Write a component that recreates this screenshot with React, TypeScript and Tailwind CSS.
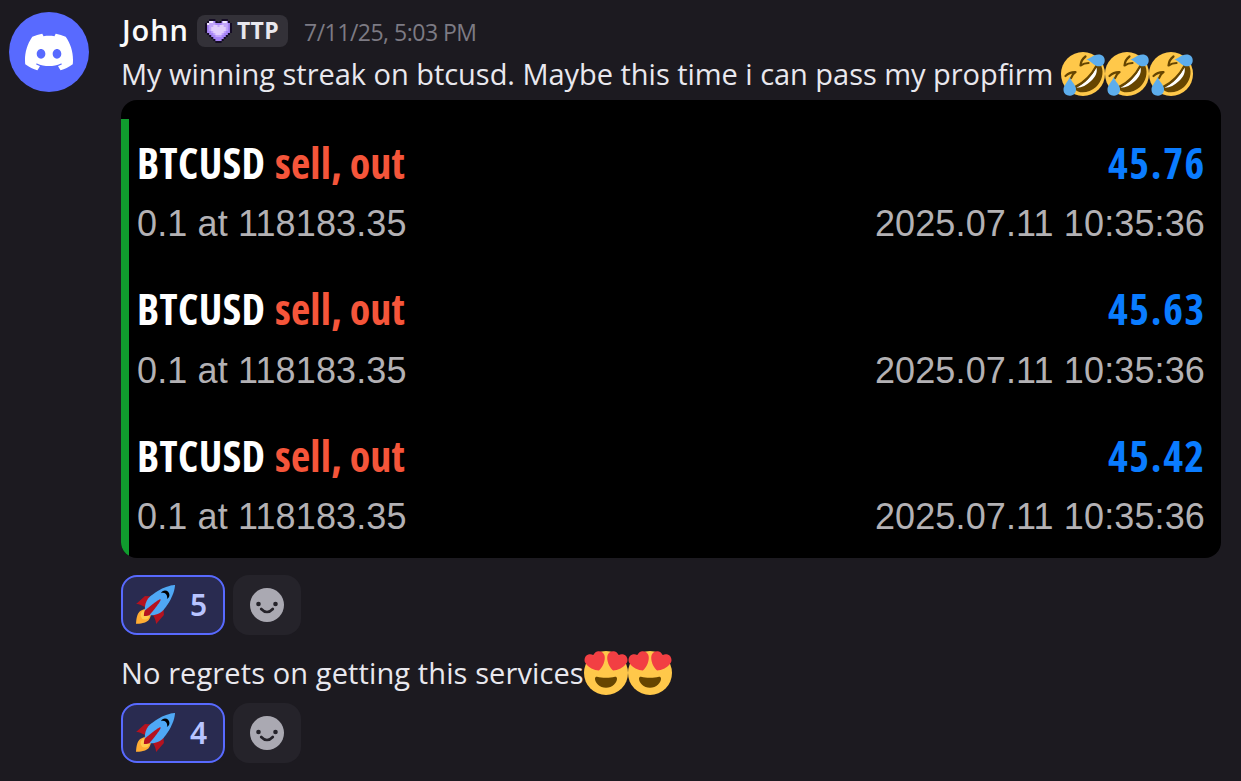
import { SiDiscord } from 'react-icons/si'

const deals = [
  { symbol: 'BTCUSD', side: 'sell, out', profit: '45.76', detail: '0.1 at 118183.35', time: '2025.07.11 10:35:36' },
  { symbol: 'BTCUSD', side: 'sell, out', profit: '45.63', detail: '0.1 at 118183.35', time: '2025.07.11 10:35:36' },
  { symbol: 'BTCUSD', side: 'sell, out', profit: '45.42', detail: '0.1 at 118183.35', time: '2025.07.11 10:35:36' },
]

function Rofl() {
  return (
    <svg viewBox="0 0 44 44" className="size-11 shrink-0">
      <circle cx="22" cy="22" r="22" fill="#ffc84a" />
      <path d="M36 12.5c1.500-.5 3.500 0 4.500 2 2.500 6 .5 15-5.500 20.500-5.500 5-13 6.500-18 4.500-2-.8-3.500-2.500-3-4 9-4.500 17-12.500 22-23z" fill="#664500" />
      <path d="M35.500 15.500c1.200 4.500-1 9.500-5.500 13.500-4.500 4.300-9.500 7-14.500 6.800 8.500-4.300 15-11 20-20.300z" fill="#fff" />
      <path d="M35.500 13.500c-5 9.500-12.500 17-21.500 21.500" fill="none" stroke="#664500" strokeWidth="2" strokeLinecap="round" />
      <path d="M4.500 24c3-2.800 6.500-4 10-3.800-2.300 1.500-3.800 3.500-4.500 6" fill="none" stroke="#664500" strokeWidth="2.2" strokeLinecap="round" strokeLinejoin="round" />
      <path d="M24.500 4.500c-3 2.200-4.700 5.300-5 9 2.500-1.700 5.200-2.500 8-2.500" fill="none" stroke="#664500" strokeWidth="2.2" strokeLinecap="round" strokeLinejoin="round" />
      <path d="M25.500 7.500c4-1 6.500-5 12-5 4 0 6.500 2.500 6.200 6.500-.4 4-3.700 6-7.200 5.200-4-.9-6-4.700-11-6.700z" fill="#5dadec" />
      <path d="M8.800 25c1.200 4.500 5.400 7 6.200 11.500.5 4-2.200 7-5.800 7.200-3.700.2-6.500-2-6.700-5.700-.3-4.500 4.300-8 6.300-13z" fill="#5dadec" />
    </svg>
  )
}

function HeartEyes() {
  return (
    <svg viewBox="0 0 36 36" className="size-11 shrink-0">
      <circle cx="18" cy="18" r="18" fill="#ffc84a" />
      <path fill="#664500" d="M18 21.849c-2.966 0-4.935-.346-7.369-.819-.557-.106-1.638 0-1.638 1.638 0 3.275 3.763 7.369 9.007 7.369s9.007-4.094 9.007-7.369c0-1.638-1.082-1.745-1.638-1.638-2.434.473-4.402.819-7.369.819" />
      <path fill="#f23f43" d="M16.65 3.281C15.791.85 13.126-.426 10.694.431c-1.476.52-2.521 1.711-2.928 3.104-1.191-.829-2.751-1.1-4.225-.58C1.111 3.813-.167 6.48.692 8.911c.122.344.284.663.472.958 1.951 3.582 7.588 6.1 11.001 6.131 2.637-2.167 5.446-7.665 4.718-11.677-.038-.348-.113-.698-.233-1.042zm2.7 0C20.209.85 22.875-.426 25.306.431c1.476.52 2.521 1.711 2.929 3.104 1.191-.829 2.751-1.1 4.225-.58 2.43.858 3.707 3.525 2.85 5.956-.123.344-.284.663-.473.958-1.951 3.582-7.588 6.1-11.002 6.131-2.637-2.167-5.445-7.665-4.717-11.677.037-.348.112-.698.232-1.042z" />
    </svg>
  )
}

function Rocket() {
  return (
    <svg viewBox="0 0 36 36" className="size-10 shrink-0">
      <path fill="#b5121f" d="M1 17l8-7 16 1 1 16-7 8s.001-5.999-6-12-12-6-12-6z" />
      <path fill="#ffac33" d="M.973 35s-.036-7.979 2.985-11S15 21.187 15 21.187 14.999 29 11.999 32c-3 3-11.026 3-11.026 3z" />
      <circle fill="#ffcc4d" cx="8.999" cy="27" r="4" />
      <path fill="#4fa8f5" d="M35.999 0s-10 0-22 10c-6 5-6 14-4 16s11 2 16-4c10-12 10-22 10-22z" />
      <path d="M26.999 5c-1.623 0-3.013.971-3.641 2.36.502-.227 1.055-.36 1.641-.36 2.209 0 4 1.791 4 4 0 .586-.133 1.139-.359 1.64 1.389-.627 2.359-2.017 2.359-3.64 0-2.209-1.791-4-4-4z" />
      <path fill="#b5121f" d="M8 28s0-4 1-5 13.001-10.999 14-10-9.001 13-10.001 14S8 28 8 28z" />
    </svg>
  )
}

function PixelHeart() {
  return (
    <svg viewBox="0 0 13 12" className="h-6 w-[27px] shrink-0" preserveAspectRatio="none">
      <path fill="#150c25" d="M2 0h3v1h1v.5h1V1h1V0h3v1h1v1h1v5h-1v1h-1v1h-1v1H9v1H8v1H5v-1H4v-1H3V9H2V8H1V7H0V2h1V1h1z" />
      <path fill="#a684f5" d="M2 1h3v1h3V1h3v1h1v5h-1v1h-1v1H9v1H8v1H5v-1H4V9H3V8H2V7H1V2h1z" />
      <path fill="#c3a6fb" d="M2 2h3v1h3V2h3v4h-1v1H9v1H8v1H5V8H4V7H3V6H2z" />
      <path fill="#e2cffb" d="M3 4h1V3h2v1h1V3h2v1h1v2H9v1H8v1H5V7H4V6H3z" />
      <path fill="#f1e8ff" d="M2 1h2v1H2zM8.500 1h2v1h-2zM1 2h1v1H1z" />
    </svg>
  )
}

function Reactions({ count }: { count: number }) {
  return (
    <div className="flex h-15 gap-2">
      <div className="flex w-26 items-center rounded-2xl border-2 border-[#586aff] bg-[#292b50] pl-3">
        <Rocket />
        <span className="-mt-0.5 ml-[15px] font-['Noto_Sans',sans-serif] text-[30px] font-semibold text-[#b8c4ff]">{count}</span>
      </div>
      <div className="flex w-17 items-center justify-center rounded-2xl bg-[#25232a]">
        <svg viewBox="0 0 34 34" className="size-[34px]">
          <circle cx="17" cy="17" r="17" fill="#aaa9b2" />
          <circle cx="8.500" cy="16" r="2.300" fill="#25232a" />
          <circle cx="25.500" cy="16" r="2.300" fill="#25232a" />
          <path d="M11.200 21q5.800 6 11.600 0" fill="none" stroke="#25232a" strokeWidth="2.700" strokeLinecap="round" />
        </svg>
      </div>
    </div>
  )
}

export default function App() {
  return (
    <div className="flex h-[781px] w-[1241px] overflow-hidden bg-[#1c1a20] pt-3 pl-[9px] font-['Open_Sans',sans-serif] whitespace-nowrap">
      <div className="flex size-20 shrink-0 items-center justify-center rounded-full bg-[#586aff] text-white">
        <SiDiscord className="size-12" />
      </div>

      <div className="ml-8 w-[1100px]">
        <div className="flex h-10 items-center">
          <span className="-mt-1 w-[76px] pl-px text-[29px] font-semibold tracking-[0.9px] text-[#fbfbfb]">John</span>
          <span className="-mt-0.5 flex h-8 w-[91px] items-center rounded-lg bg-[#333138] pl-2">
            <PixelHeart />
            <span className="-mt-0.5 ml-[5px] text-[23px] font-bold tracking-[0.3px] text-[#e9e8ee]">TTP</span>
          </span>
          <span className="ml-4 text-[23px] tracking-[-0.5px] text-[#7d7b84]">7/11/25, 5:03 PM</span>
        </div>
        <div className="flex h-11 items-center text-[29px] text-[#e9e8ee]">
          <span className="w-[940px] tracking-[-0.03px]">My winning streak on btcusd. Maybe this time i can pass my propfirm</span>
          <Rofl />
          <Rofl />
          <Rofl />
        </div>

        <div className="mt-1 h-[458px] overflow-hidden rounded-2xl bg-black pt-[19px]">
          <div className="h-[439px] border-l-8 border-[#109b2e] pt-[13px] pr-4 pl-2">
            {deals.map((deal) => (
              <div key={deal.profit} className="h-[146.5px]">
                <div className="flex h-[60px] items-center justify-between text-[42px] font-bold [font-stretch:75%]">
                  <div className="flex">
                    <span className="w-[138px] tracking-[0.4px] text-white">{deal.symbol}</span>
                    <span className="tracking-[0.2px] text-[#f5553a]">{deal.side}</span>
                  </div>
                  <span className="-mr-px tracking-[1.7px] text-[#0a7cff]">{deal.profit}</span>
                </div>
                <div className="mt-0.5 flex h-[60px] items-center justify-between font-['Liberation_Sans',sans-serif] text-[36px] tracking-[0.13px] text-[#b3b1b4]">
                  <span>{deal.detail}</span>
                  <span>{deal.time}</span>
                </div>
              </div>
            ))}
          </div>
        </div>

        <div className="mt-[17px]">
          <Reactions count={5} />
        </div>
        <div className="mt-4 flex h-11 items-center text-[29px] text-[#e9e8ee]">
          <span className="w-[463px] tracking-[0.11px]">No regrets on getting this services</span>
          <HeartEyes />
          <HeartEyes />
        </div>
        <div className="mt-2">
          <Reactions count={4} />
        </div>
      </div>
    </div>
  )
}
